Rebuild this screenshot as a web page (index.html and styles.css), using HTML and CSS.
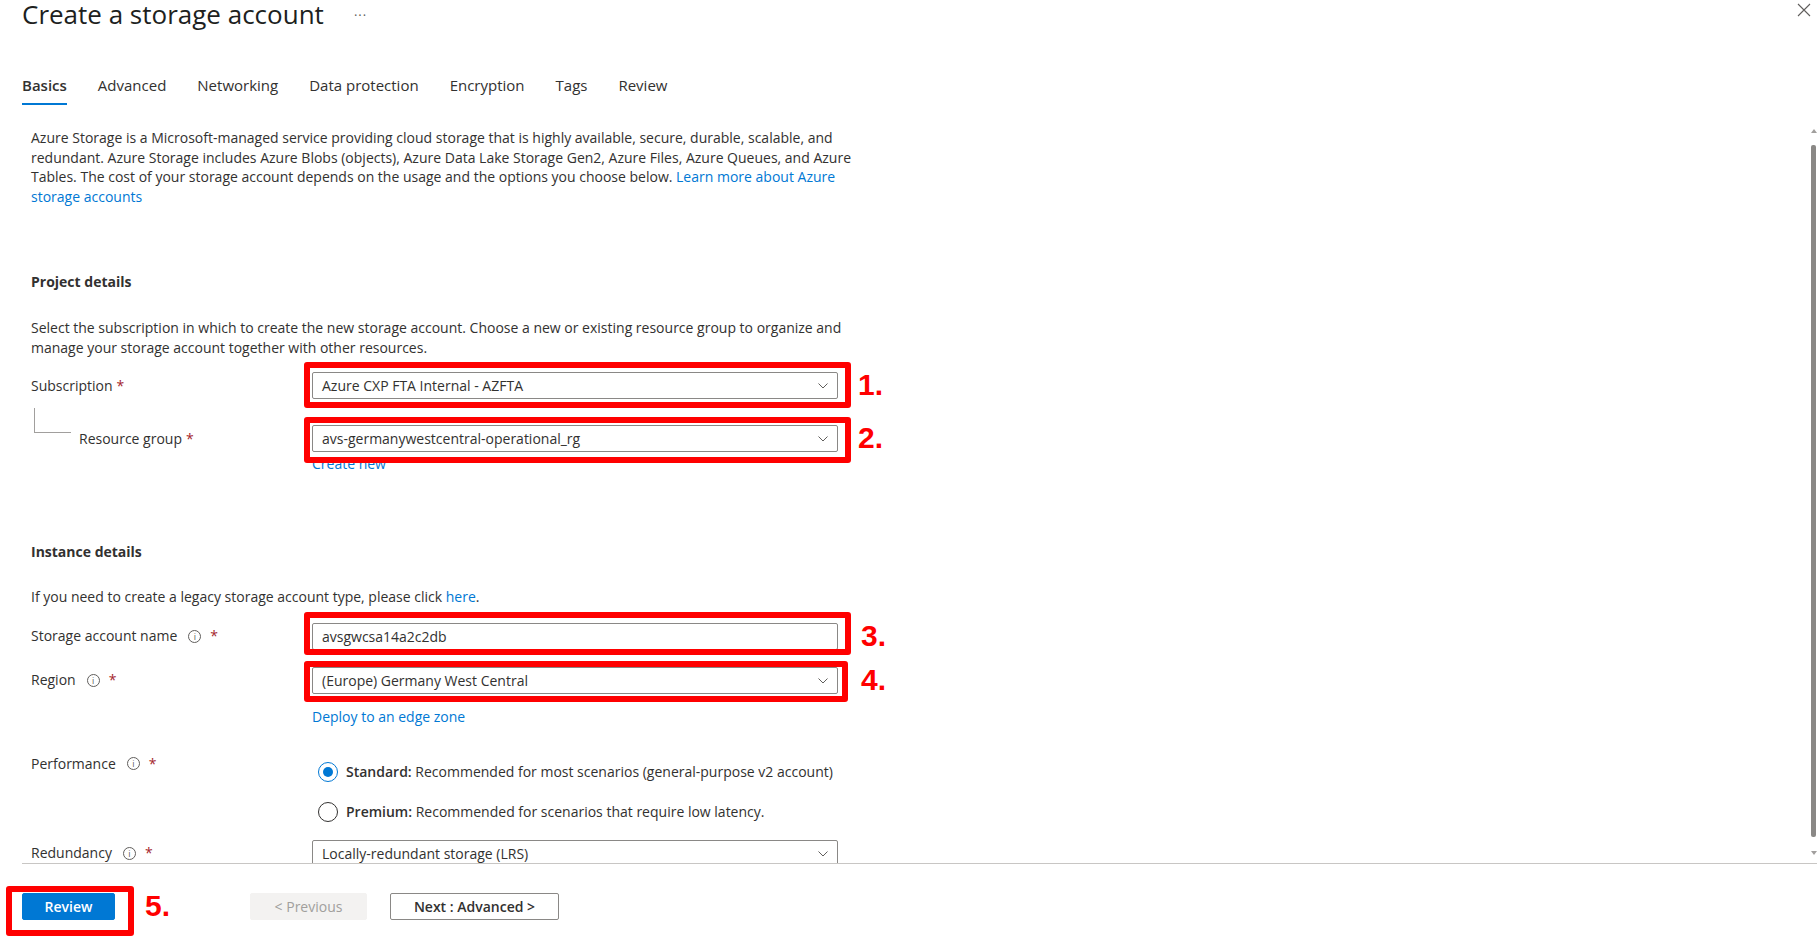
FILE: index.html
```html
<!DOCTYPE html>
<html lang="en">
<head>
    <meta charset="UTF-8">
    <meta name="viewport" content="width=device-width, initial-scale=1.0">
    <title>Create a storage account</title>
    <link rel="stylesheet" href="styles.css">
</head>
<body>
    <div class="blade">
        <div class="blade-header">
            <h1>Create a storage account</h1>
            <span class="more">&middot;&middot;&middot;</span>
            <a href="#" class="close" title="Close">
                <svg width="14" height="14" viewBox="0 0 14 14"><path d="M1 1 L13 13 M13 1 L1 13" stroke="#605e5c" stroke-width="1.1" fill="none"/></svg>
            </a>
        </div>

        <div class="tabs">
            <a href="#" class="tab active">Basics</a>
            <a href="#" class="tab">Advanced</a>
            <a href="#" class="tab">Networking</a>
            <a href="#" class="tab">Data protection</a>
            <a href="#" class="tab">Encryption</a>
            <a href="#" class="tab">Tags</a>
            <a href="#" class="tab">Review</a>
        </div>

        <div class="content">
            <p class="intro">Azure Storage is a Microsoft-managed service providing cloud storage that is highly available, secure, durable, scalable, and redundant. Azure Storage includes Azure Blobs (objects), Azure Data Lake Storage Gen2, Azure Files, Azure Queues, and Azure Tables. The cost of your storage account depends on the usage and the options you choose below. <a href="#">Learn more about Azure storage accounts</a></p>

            <h2 class="section project">Project details</h2>
            <p class="section-text">Select the subscription in which to create the new storage account. Choose a new or existing resource group to organize and manage your storage account together with other resources.</p>

            <div class="field sub-row">
                <label>Subscription <span class="req">*</span></label>
                <div class="control">
                    <div class="dropdown">Azure CXP FTA Internal - AZFTA<svg class="chev" width="10" height="6" viewBox="0 0 10 6"><polyline points="0.5,0.5 5,5 9.5,0.5" fill="none" stroke="#605e5c" stroke-width="1"/></svg></div>
                    <span class="mark mark-1"></span>
                    <span class="num">1.</span>
                </div>
            </div>

            <div class="field rg-row">
                <label class="child"><span class="tree"></span>Resource group <span class="req">*</span></label>
                <div class="control">
                    <div class="dropdown">avs-germanywestcentral-operational_rg<svg class="chev" width="10" height="6" viewBox="0 0 10 6"><polyline points="0.5,0.5 5,5 9.5,0.5" fill="none" stroke="#605e5c" stroke-width="1"/></svg></div>
                    <span class="mark mark-2"></span>
                    <span class="num">2.</span>
                </div>
            </div>
            <div class="under-link create"><a href="#">Create new</a></div>

            <h2 class="section instance">Instance details</h2>
            <p class="legacy">If you need to create a legacy storage account type, please click <a href="#">here</a>.</p>

            <div class="field name-row">
                <label>Storage account name <span class="info">i</span> <span class="req">*</span></label>
                <div class="control">
                    <div class="textbox">avsgwcsa14a2c2db</div>
                    <span class="mark mark-3"></span>
                    <span class="num">3.</span>
                </div>
            </div>

            <div class="field region-row">
                <label>Region <span class="info">i</span> <span class="req">*</span></label>
                <div class="control">
                    <div class="dropdown">(Europe) Germany West Central<svg class="chev" width="10" height="6" viewBox="0 0 10 6"><polyline points="0.5,0.5 5,5 9.5,0.5" fill="none" stroke="#605e5c" stroke-width="1"/></svg></div>
                    <span class="mark mark-4"></span>
                    <span class="num">4.</span>
                </div>
            </div>
            <div class="under-link deploy"><a href="#">Deploy to an edge zone</a></div>

            <div class="field perf-row">
                <label>Performance <span class="info">i</span> <span class="req">*</span></label>
                <div class="radios">
                    <div class="radio checked"><span class="dot"></span><b>Standard:</b>&nbsp;Recommended for most scenarios (general-purpose v2 account)</div>
                    <div class="radio"><span class="dot"></span><b>Premium:</b>&nbsp;Recommended for scenarios that require low latency.</div>
                </div>
            </div>

            <div class="field red-row">
                <label>Redundancy <span class="info">i</span> <span class="req">*</span></label>
                <div class="control">
                    <div class="dropdown">Locally-redundant storage (LRS)<svg class="chev" width="10" height="6" viewBox="0 0 10 6"><polyline points="0.5,0.5 5,5 9.5,0.5" fill="none" stroke="#605e5c" stroke-width="1"/></svg></div>
                </div>
            </div>

            <div class="scrollbar">
                <span class="arrow up"></span>
                <span class="thumb"></span>
                <span class="arrow down"></span>
            </div>
        </div>

        <div class="footer">
            <div class="review-wrap">
                <a href="#" class="btn primary">Review</a>
                <span class="mark mark-5"></span>
                <span class="num num-5">5.</span>
            </div>
            <a href="#" class="btn disabled">&lt; Previous</a>
            <a href="#" class="btn next">Next : Advanced &gt;</a>
        </div>
    </div>
</body>
</html>
```

FILE: styles.css
```css
body {
  margin: 0;
  padding: 0;
  font-family: "Open Sans", sans-serif;
  font-size: 14px;
  color: #323130;
  background: #fff;
}
a {
  color: #0078d4;
  text-decoration: none;
}
.blade {
  height: 936px;
  overflow: hidden;
  position: relative;
}

/* header */
.blade-header {
  display: flex;
  align-items: flex-start;
  height: 30px;
  padding-left: 22px;
}
.blade-header h1 {
  margin: 0;
  font-size: 26px;
  font-weight: 400;
  line-height: 28px;
  color: #201f1e;
}
.more {
  margin: 5px 0 0 30px;
  color: #605e5c;
  font-size: 13px;
  line-height: 20px;
  letter-spacing: 1px;
}
.close {
  position: absolute;
  top: 2px;
  right: 6px;
}

/* tabs */
.tabs {
  display: flex;
  gap: 31px;
  margin-top: 45px;
  padding-left: 22px;
}
.tab {
  color: #323130;
  font-size: 15px;
  line-height: 20px;
  padding-bottom: 8px;
  border-bottom: 2px solid transparent;
}
.tab.active {
  font-weight: 600;
  border-bottom-color: #0078d4;
}

/* scroll area */
.content {
  position: relative;
  height: 748px;
  margin-top: 10px;
  padding: 13px 0 0 31px;
  box-sizing: border-box;
  overflow: hidden;
}
.content p {
  margin: 0;
  line-height: 19.5px;
}
.intro {
  width: 836px;
}
.section {
  margin: 66px 0 0;
  font-size: 14px;
  font-weight: 700;
  line-height: 20px;
}
.section-text {
  width: 815px;
  margin-top: 26px !important;
}

/* form rows */
.field {
  display: flex;
  align-items: center;
}
.field label {
  width: 281px;
  flex-shrink: 0;
  display: flex;
  align-items: center;
  line-height: 20px;
}
.req {
  color: #a4262c;
  margin-left: 4px;
}
.info {
  display: inline-flex;
  align-items: center;
  justify-content: center;
  width: 13px;
  height: 13px;
  box-sizing: border-box;
  border: 1px solid #605e5c;
  border-radius: 50%;
  font-size: 9px;
  line-height: 1;
  color: #605e5c;
  margin-left: 11px;
  margin-right: 5px;
}
.control {
  position: relative;
  width: 526px;
}
.dropdown, .textbox {
  position: relative;
  height: 27px;
  box-sizing: border-box;
  border: 1px solid #8a8886;
  border-radius: 2px;
  padding: 0 9px;
  line-height: 25px;
  white-space: nowrap;
  overflow: hidden;
}
.chev {
  position: absolute;
  right: 9px;
  top: 10px;
}

.sub-row { margin-top: 15px; }
.rg-row { margin-top: 26px; }
.name-row { margin-top: 16px; }
.region-row { margin-top: 17px; }
.red-row { margin-top: 16px; }

.child {
  position: relative;
  padding-left: 48px;
  box-sizing: border-box;
}
.tree {
  position: absolute;
  left: 3px;
  top: -21px;
  width: 36px;
  height: 24px;
  border-left: 1px solid #a19f9d;
  border-bottom: 1px solid #a19f9d;
}

.under-link {
  margin: 4px 0 0 281px;
  line-height: 20px;
}
.under-link.create { margin-top: 2px; }
.under-link.deploy { margin-top: 13px; }

.instance { margin-top: 68px; }
.legacy { margin-top: 25px !important; }

/* radios */
.perf-row {
  margin-top: 25px;
  align-items: flex-start;
}
.perf-row label { margin-top: 2px; }
.radios {
  padding: 8px 0 0 6px;
  display: flex;
  flex-direction: column;
  gap: 16px;
}
.radio {
  display: flex;
  align-items: center;
  height: 24px;
}
.radio b { font-weight: 600; }
.radio .dot {
  width: 20px;
  height: 20px;
  box-sizing: border-box;
  border: 1px solid #323130;
  border-radius: 50%;
  margin-right: 8px;
  position: relative;
}
.radio.checked .dot { border-color: #0078d4; }
.radio.checked .dot::after {
  content: "";
  position: absolute;
  left: 4px;
  top: 4px;
  width: 10px;
  height: 10px;
  border-radius: 50%;
  background: #0078d4;
}

/* red annotation boxes */
.mark {
  position: absolute;
  border: 6px solid #ff0000;
  border-radius: 3px;
  z-index: 2;
  pointer-events: none;
}
.mark-1 { left: -8px; right: -13px; top: -10px; bottom: -9px; }
.mark-2 { left: -8px; right: -13px; top: -8px; bottom: -11px; }
.mark-3 { left: -8px; right: -13px; top: -11px; bottom: -5px; }
.mark-4 { left: -8px; right: -10px; top: -6px; bottom: -8px; }
.num {
  position: absolute;
  left: 546px;
  top: -2px;
  font-family: "Liberation Sans", Arial, sans-serif;
  font-weight: 700;
  font-size: 30px;
  line-height: 30px;
  color: #ff0000;
}
.name-row .num, .region-row .num { left: 549px; }

/* fake scrollbar */
.scrollbar {
  position: absolute;
  right: 1px;
  top: 10px;
  bottom: 4px;
  width: 5px;
}
.scrollbar .thumb {
  position: absolute;
  left: 0;
  right: 0;
  top: 20px;
  bottom: 22px;
  background: #8a8886;
  border-radius: 2px;
}
.arrow {
  position: absolute;
  left: 0;
  width: 0;
  height: 0;
  border-left: 3px solid transparent;
  border-right: 3px solid transparent;
}
.arrow.up { top: 4px; border-bottom: 4px solid #a19f9d; }
.arrow.down { bottom: 4px; border-top: 4px solid #a19f9d; }

/* footer */
.footer {
  display: flex;
  align-items: center;
  margin-left: 22px;
  border-top: 1px solid #c8c6c4;
  padding-top: 29px;
}
.review-wrap {
  position: relative;
  margin-right: 135px;
}
.btn {
  display: inline-block;
  box-sizing: border-box;
  height: 27px;
  line-height: 25px;
  padding: 0 20px;
  border: 1px solid #8a8886;
  border-radius: 2px;
  color: #323130;
  font-weight: 600;
  font-size: 14px;
  text-align: center;
}
.btn.primary {
  width: 93px;
  background: #0078d4;
  border-color: #0078d4;
  color: #fff;
  display: block;
}
.btn.disabled {
  width: 117px;
  background: #f3f2f1;
  border-color: #f3f2f1;
  color: #a19f9d;
  font-weight: 400;
  margin-right: 23px;
}
.btn.next {
  width: 169px;
}
.mark-5 {
  left: -16px;
  right: -19px;
  top: -7px;
  bottom: -16px;
}
.num-5 {
  left: 123px;
  top: -2px;
}
```
